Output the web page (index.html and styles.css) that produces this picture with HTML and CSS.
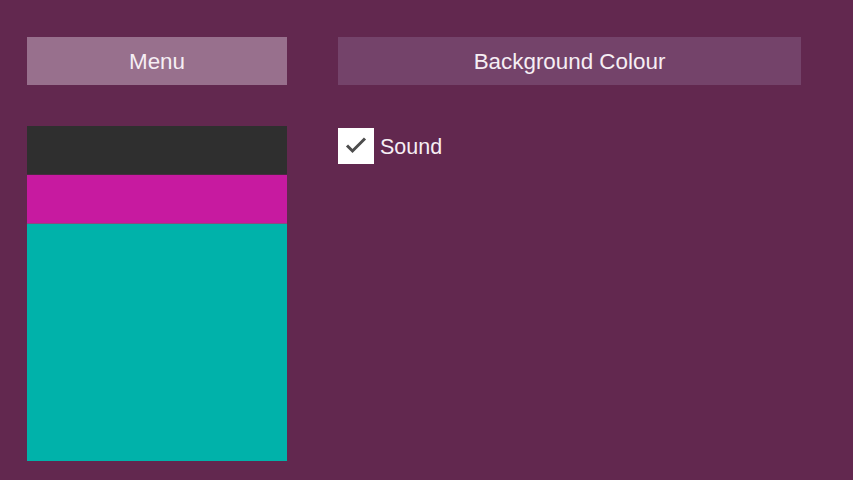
FILE: index.html
```html
<!DOCTYPE html>
<html lang="en">
<head>
    <meta charset="UTF-8" />
    <meta name="viewport" content="width=device-width, initial-scale=1.0"/>
    <title>Settings</title>
    <link rel="stylesheet" href="styles.css">
</head>
<body>
    <div class="layout">
        <div class="side">
            <div class="tab tab-menu">Menu</div>
            <div class="swatches">
                <div class="swatch swatch-dark"></div>
                <div class="swatch swatch-pink"></div>
                <div class="swatch swatch-teal"></div>
            </div>
        </div>
        <div class="main">
            <div class="tab tab-bg">Background Colour</div>
            <label class="toggle">
                <span class="check">
                    <svg width="36" height="36" viewBox="0 0 36 36">
                        <path d="M9 17.5 L14.5 23 L27 10.5" fill="none" stroke="#4d4d4d" stroke-width="3"/>
                    </svg>
                </span>
                <span class="toggle-label">Sound</span>
            </label>
        </div>
    </div>
</body>
</html>
```

FILE: styles.css
```css
html, body {
    margin: 0;
    height: 100%;
}
body {
    background-color: #62284f;
    font-family: "Liberation Sans", Arial, sans-serif;
    color: #f6eef4;
}
.layout {
    display: flex;
    gap: 51px;
    padding: 37px 27px 19px 27px;
    height: 100%;
    box-sizing: border-box;
}
.side {
    width: 260px;
    display: flex;
    flex-direction: column;
    gap: 41px;
}
.main {
    width: 463px;
    display: flex;
    flex-direction: column;
    gap: 43px;
}
.tab {
    height: 48px;
    box-sizing: border-box;
    padding-top: 2px;
    display: flex;
    align-items: center;
    justify-content: center;
    font-size: 22.4px;
}
.tab-menu {
    background-color: #98708d;
}
.tab-bg {
    background-color: #74436a;
}
.swatches {
    flex: 1;
    display: flex;
    flex-direction: column;
}
.swatch-dark {
    height: 48px;
    background-color: #2f2f2f;
    border-bottom: 1px solid #4a2a42;
}
.swatch-pink {
    height: 48px;
    background-color: #c71aa0;
    border-bottom: 1px solid #8a4a80;
}
.swatch-teal {
    flex: 1;
    background-color: #00b2aa;
}
.toggle {
    display: flex;
    align-items: center;
    gap: 6px;
}
.check {
    width: 36px;
    height: 36px;
    background: #ffffff;
    display: flex;
}
.toggle-label {
    font-size: 21.5px;
    padding-top: 2px;
}
```
